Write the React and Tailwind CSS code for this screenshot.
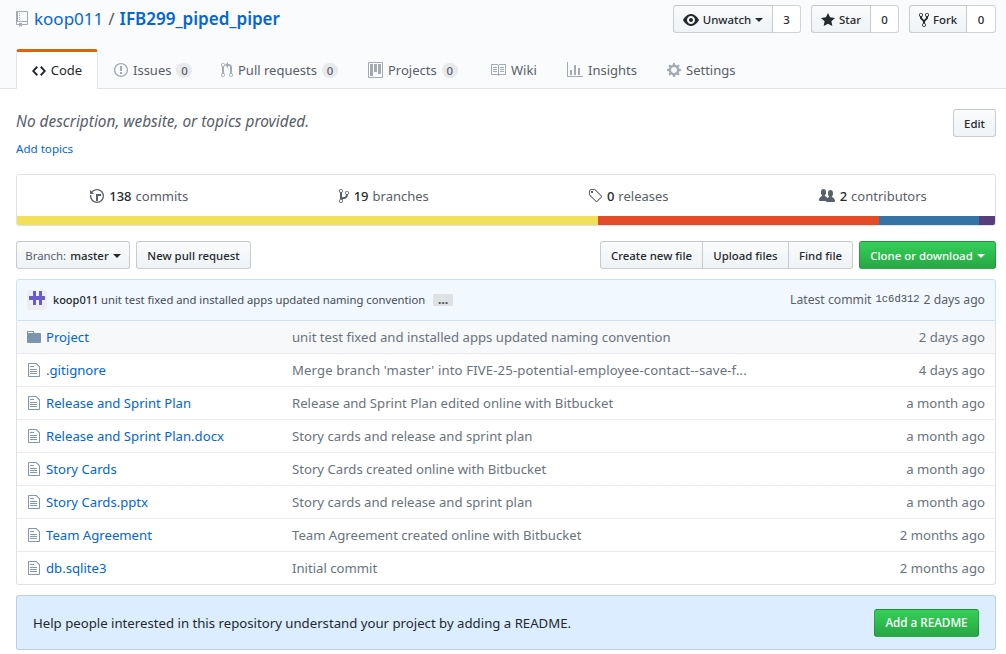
import React from "react";

const P = {
  repo: ["0 0 12 16", "M4 9H3V8h1v1zm0-3H3v1h1V6zm0-2H3v1h1V4zm0-2H3v1h1V2zm8-1v12c0 .55-.45 1-1 1H6v2l-1.5-1.5L3 16v-2H1c-.55 0-1-.45-1-1V1c0-.55.45-1 1-1h10c.55 0 1 .45 1 1zm-1 10H1v2h2v-1h3v1h5v-2zm0-10H2v9h9V1z"],
  code: ["0 0 14 16", "M9.5 3L8 4.5 11.5 8 8 11.5 9.5 13 14 8 9.5 3zm-5 0L0 8l4.5 5L6 11.5 2.5 8 6 4.5 4.5 3z"],
  issue: ["0 0 14 16", "M7 2.3c3.14 0 5.7 2.56 5.7 5.7s-2.56 5.7-5.7 5.7A5.71 5.71 0 0 1 1.3 8c0-3.14 2.56-5.7 5.7-5.7zM7 1C3.14 1 0 4.14 0 8s3.14 7 7 7 7-3.14 7-7-3.14-7-7-7zm1 3H6v5h2V4zm0 6H6v2h2v-2z"],
  pr: ["0 0 12 16", "M11 11.28V5c-.03-.78-.34-1.47-.94-2.06C9.46 2.35 8.78 2.03 8 2H7V0L4 3l3 3V4h1c.27.02.48.11.69.31.21.2.3.42.31.69v6.28A1.993 1.993 0 0 0 10 15a1.993 1.993 0 0 0 1-3.72zm-1 2.92c-.66 0-1.2-.55-1.2-1.2 0-.65.55-1.2 1.2-1.2.65 0 1.2.55 1.2 1.2 0 .65-.55 1.2-1.2 1.2zM4 3c0-1.11-.89-2-2-2a1.993 1.993 0 0 0-1 3.72v6.56A1.993 1.993 0 0 0 2 15a1.993 1.993 0 0 0 1-3.72V4.72c.59-.34 1-.98 1-1.72zm-.8 10c0 .66-.55 1.2-1.2 1.2-.65 0-1.2-.55-1.2-1.2 0-.65.55-1.2 1.2-1.2.65 0 1.2.55 1.2 1.2zM2 4.2C1.34 4.2.8 3.65.8 3c0-.65.55-1.2 1.2-1.2.65 0 1.2.55 1.2 1.2 0 .65-.55 1.2-1.2 1.2z"],
  project: ["0 0 15 16", "M10 12h3V2h-3v10zm-4-2h3V2H6v8zm-4 4h3V2H2v12zm-1 1h13V1H1v14zM14 0H1a1 1 0 0 0-1 1v14a1 1 0 0 0 1 1h13a1 1 0 0 0 1-1V1a1 1 0 0 0-1-1z"],
  book: ["0 0 16 16", "M3 5h4v1H3V5zm0 3h4V7H3v1zm0 2h4V9H3v1zm11-5h-4v1h4V5zm0 2h-4v1h4V7zm0 2h-4v1h4V9zm2-6v9c0 .55-.45 1-1 1H9.5l-1 1-1-1H2c-.55 0-1-.45-1-1V3c0-.55.45-1 1-1h5.5l1 1 1-1H15c.55 0 1 .45 1 1zm-8 .5L7.5 3H2v9h6V3.5zm7-.5H9.5l-.5.5V12h6V3z"],
  graph: ["0 0 16 16", "M16 14v1H0V0h1v14h15zM5 13H3V8h2v5zm4 0H7V3h2v10zm4 0h-2V6h2v7z"],
  gear: ["0 0 14 16", "M14 8.77v-1.6l-1.94-.64-.45-1.09.88-1.84-1.13-1.13-1.81.91-1.09-.45-.69-1.92h-1.6l-.63 1.94-1.11.45-1.84-.88-1.13 1.13.91 1.81-.45 1.09L0 7.23v1.59l1.94.64.45 1.09-.88 1.84 1.13 1.13 1.81-.91 1.09.45.69 1.92h1.59l.63-1.94 1.11-.45 1.84.88 1.13-1.13-.92-1.81.47-1.09L14 8.75v.02zM7 11c-1.66 0-3-1.34-3-3s1.34-3 3-3 3 1.34 3 3-1.34 3-3 3z"],
  eye: ["0 0 16 16", "M8.06 2C3 2 0 8 0 8s3 6 8.06 6C13 14 16 8 16 8s-3-6-7.94-6zM8 12c-2.2 0-4-1.78-4-4 0-2.2 1.8-4 4-4 2.22 0 4 1.8 4 4 0 2.22-1.78 4-4 4zm2-4c0 1.11-.89 2-2 2-1.11 0-2-.89-2-2 0-1.11.89-2 2-2 1.11 0 2 .89 2 2z"],
  star: ["0 0 14 16", "M14 6l-4.9-.64L7 1 4.9 5.36 0 6l3.6 3.26L2.67 14 7 11.67 11.33 14l-.93-4.74L14 6z"],
  fork: ["0 0 10 16", "M8 1a1.993 1.993 0 0 0-1 3.72V6L5 8 3 6V4.72A1.993 1.993 0 0 0 2 1a1.993 1.993 0 0 0-1 3.72V6.5l3 3v1.78A1.993 1.993 0 0 0 5 15a1.993 1.993 0 0 0 1-3.72V9.5l3-3V4.72A1.993 1.993 0 0 0 8 1zM2 4.2C1.34 4.2.8 3.65.8 3c0-.65.55-1.2 1.2-1.2.65 0 1.2.55 1.2 1.2 0 .65-.55 1.2-1.2 1.2zm3 10c-.66 0-1.2-.55-1.2-1.2 0-.65.55-1.2 1.2-1.2.65 0 1.2.55 1.2 1.2 0 .65-.55 1.2-1.2 1.2zm3-10c-.66 0-1.2-.55-1.2-1.2 0-.65.55-1.2 1.2-1.2.65 0 1.2.55 1.2 1.2 0 .65-.55 1.2-1.2 1.2z"],
  history: ["0 0 14 16", "M8 13H6V6h5v2H8v5zM7 1C4.81 1 2.87 2.02 1.59 3.59L0 2v4h4L2.5 4.5C3.55 3.17 5.17 2.3 7 2.3c3.14 0 5.7 2.56 5.7 5.7s-2.56 5.7-5.7 5.7A5.71 5.71 0 0 1 1.3 8c0-.34.03-.67.09-1H.08C.03 7.33 0 7.66 0 8c0 3.86 3.14 7 7 7s7-3.14 7-7-3.14-7-7-7z"],
  branch: ["0 0 10 16", "M10 5c0-1.11-.89-2-2-2a1.993 1.993 0 0 0-1 3.72v.3c-.02.52-.23.98-.63 1.38-.4.4-.86.61-1.38.63-.83.02-1.48.16-2 .45V4.72a1.993 1.993 0 0 0-1-3.72C.88 1 0 1.89 0 3a2 2 0 0 0 1 1.72v6.56c-.59.35-1 .99-1 1.72 0 1.11.89 2 2 2 1.11 0 2-.89 2-2 0-.53-.2-1-.53-1.36.09-.06.48-.41.59-.47.25-.11.56-.17.94-.17 1.05-.05 1.95-.45 2.75-1.25S8.95 7.77 9 6.73h-.02C9.59 6.37 10 5.73 10 5zM2 1.8c.66 0 1.2.55 1.2 1.2 0 .65-.55 1.2-1.2 1.2C1.35 4.2.8 3.65.8 3c0-.65.55-1.2 1.2-1.2zm0 12.41c-.66 0-1.2-.55-1.2-1.2 0-.65.55-1.2 1.2-1.2.65 0 1.2.55 1.2 1.2 0 .65-.55 1.2-1.2 1.2zm6-8c-.66 0-1.2-.55-1.2-1.2 0-.65.55-1.2 1.2-1.2.65 0 1.2.55 1.2 1.2 0 .65-.55 1.2-1.2 1.2z"],
  tag: ["0 0 14 16", "M7.73 1.73C7.26 1.26 6.62 1 5.96 1H3.5C2.13 1 1 2.13 1 3.5v2.47c0 .66.27 1.3.73 1.77l6.06 6.06c.39.39 1.02.39 1.41 0l4.59-4.59a.996.996 0 0 0 0-1.41L7.73 1.73zM2.38 7.09c-.31-.3-.47-.7-.47-1.13V3.5c0-.88.72-1.59 1.59-1.59h2.47c.42 0 .83.16 1.13.47l6.14 6.13-4.73 4.73-6.13-6.15zM3.01 3h2v2H3V3h.01z"],
  org: ["0 0 16 16", "M16 12.999c0 .439-.45 1-1 1H7.995c-.539 0-.994-.447-.995-.999H1c-.54 0-1-.561-1-1 0-2.634 3-4 3-4s.229-.409 0-1c-.841-.621-1.058-.59-1-3 .058-2.419 1.367-3 2.5-3s2.442.58 2.5 3c.058 2.41-.159 2.379-1 3-.229.59 0 1 0 1s1.549.711 2.42 2.088C9.196 9.369 10 8.999 10 8.999s.229-.409 0-1c-.841-.62-1.058-.59-1-3 .058-2.419 1.367-3 2.5-3s2.437.581 2.495 3c.059 2.41-.158 2.38-1 3-.229.59 0 1 0 1s3.005 1.366 3.005 4"],
  dir: ["0 0 14 16", "M13 4H7V3c0-.66-.31-1-1-1H1c-.55 0-1 .45-1 1v10c0 .55.45 1 1 1h12c.55 0 1-.45 1-1V5c0-.55-.45-1-1-1zM6 4H1V3h5v1z"],
  file: ["0 0 12 16", "M6 5H2V4h4v1zM2 8h7V7H2v1zm0 2h7V9H2v1zm0 2h7v-1H2v1zm10-7.5V14c0 .55-.45 1-1 1H1c-.55 0-1-.45-1-1V2c0-.55.45-1 1-1h7.5L12 4.5zM11 5L8 2H1v12h10V5z"],
};

function Icon({ n, c = "", style }) {
  const [vb, d] = P[n];
  const w = +vb.split(" ")[2];
  return (
    <svg viewBox={vb} width={w} height={16} className={"shrink-0 fill-current " + c} style={style}>
      <path fillRule="evenodd" d={d} />
    </svg>
  );
}

const Caret = ({ c = "border-t-[#24292e]" }) => (
  <span className={"inline-block w-0 h-0 border-x-[4px] border-x-transparent border-t-[4px] ml-[4px] " + c} />
);

const btn = "flex items-center justify-center h-[28px] pt-[1px] text-[11.4px] font-medium text-[#24292e] border border-[rgba(27,31,35,0.2)] bg-gradient-to-b from-[#fafbfc] to-[#eff3f6]";
const greenBtn = "flex items-center justify-center h-[28px] pt-[1px] text-[11.4px] font-medium text-white border border-[rgba(27,31,35,0.2)] rounded-[3px] bg-gradient-to-b from-[#34d058] to-[#28a745]";
const count = "flex items-center justify-center h-[28px] pt-[1px] text-[11.4px] font-medium text-[#24292e] bg-white border border-l-0 border-[rgba(27,31,35,0.2)] rounded-r-[3px]";

function Counter({ n }) {
  return <span className="ml-[5px] inline-flex items-center justify-center h-[15px] w-[16px] rounded-full bg-[rgba(27,31,35,0.08)] text-[11.4px] font-medium text-[#586069]">{n}</span>;
}

function Tab({ icon, label, n, w }) {
  return (
    <div className="flex items-center h-[40px] pt-[3px] text-[#586069] text-[13px]" style={{ width: w }}>
      <Icon n={icon} c="text-[#a3aab1] mr-[5px] -mt-[1px]" />
      <span>{label}</span>
      {n !== undefined && <Counter n={n} />}
    </div>
  );
}

const rows = [
  ["dir", "Project", "unit test fixed and installed apps updated naming convention", "2 days ago"],
  ["file", ".gitignore", "Merge branch 'master' into FIVE-25-potential-employee-contact--save-f...", "4 days ago"],
  ["file", "Release and Sprint Plan", "Release and Sprint Plan edited online with Bitbucket", "a month ago"],
  ["file", "Release and Sprint Plan.docx", "Story cards and release and sprint plan", "a month ago"],
  ["file", "Story Cards", "Story Cards created online with Bitbucket", "a month ago"],
  ["file", "Story Cards.pptx", "Story cards and release and sprint plan", "a month ago"],
  ["file", "Team Agreement", "Team Agreement created online with Bitbucket", "2 months ago"],
  ["file", "db.sqlite3", "Initial commit", "2 months ago"],
];

function Stat({ icon, n, label }) {
  return (
    <div className="flex-1 flex items-center justify-center text-[13px] text-[#586069]">
      <Icon n={icon} c="text-[#586069] mr-[5px]" />
      <span className="font-medium text-[#24292e] mr-[4px] pt-[2px]">{n}</span>
      <span className="pt-[2px]">{label}</span>
    </div>
  );
}

export default function App() {
  return (
    <div className="h-[654px] overflow-hidden bg-white text-[#24292e] font-['Noto_Sans','Open_Sans',sans-serif]">
      <div className="h-[89px] bg-[#fafbfc] border-b border-[#e1e4e8]">
        <div className="flex items-start justify-between pl-[16px] pr-[10px] pt-[5px] h-[49px]">
          <div className="flex items-center h-[28px] text-[17px]">
            <Icon n="repo" c="text-[#a3aab1] mr-[6px]" />
            <span className="text-[#0366d6]">koop011</span>
            <span className="text-[#586069] mx-[5px]">/</span>
            <span className="text-[#0366d6] font-semibold">IFB299_piped_piper</span>
          </div>
          <div className="flex">
            <div className={btn + " w-[100px] rounded-l-[3px]"}><Icon n="eye" c="mr-[4px]" />Unwatch<Caret /></div>
            <div className={count + " w-[28px]"}>3</div>
            <div className={btn + " w-[60px] rounded-l-[3px] ml-[10px]"}><Icon n="star" c="mr-[4px]" />Star</div>
            <div className={count + " w-[28px]"}>0</div>
            <div className={btn + " w-[58px] rounded-l-[3px] ml-[10px]"}><Icon n="fork" c="mr-[4px]" />Fork</div>
            <div className={count + " w-[29px]"}>0</div>
          </div>
        </div>
        <div className="flex pl-[16px]">
          <div className="flex items-center justify-center w-[82px] h-[40px] bg-white border-x border-[#e1e4e8] border-t-[3px] border-t-[#e36209] rounded-t-[3px] text-[13px] text-[#24292e] relative z-10">
            <Icon n="code" c="mr-[5px]" />Code
          </div>
          <div className="w-[16px]" />
          <Tab icon="issue" label="Issues" n={0} w={107} />
          <Tab icon="pr" label="Pull requests" n={0} w={147} />
          <Tab icon="project" label="Projects" n={0} w={122} />
          <Tab icon="book" label="Wiki" w={77} />
          <Tab icon="graph" label="Insights" w={100} />
          <Tab icon="gear" label="Settings" w={80} />
        </div>
      </div>

      <div className="pl-[16px] pr-[10px]">
        <div className="flex justify-between h-[85px] pt-[20px]">
          <div>
            <div className="text-[15.4px] italic text-[#586069] leading-[24px] pt-[1px]">No description, website, or topics provided.</div>
            <div className="text-[11.6px] text-[#0366d6] mt-[6px] leading-[18px]">Add topics</div>
          </div>
          <div className={btn + " w-[43px] rounded-[3px]"}>Edit</div>
        </div>

        <div className="h-[52px] border border-[#dfe2e5] rounded-[3px] overflow-hidden flex flex-col">
          <div className="flex-1 flex">
            <Stat icon="history" n="138" label="commits" />
            <Stat icon="branch" n="19" label="branches" />
            <Stat icon="tag" n="0" label="releases" />
            <Stat icon="org" n="2" label="contributors" />
          </div>
          <div className="flex h-[9px] w-full">
            <div className="w-[581px] bg-[#f1e05a]" />
            <div className="w-[281px] bg-[#e34c26]" />
            <div className="w-[100px] bg-[#3572a5]" />
            <div className="flex-1 bg-[#563d7c]" />
          </div>
        </div>

        <div className="flex justify-between mt-[15px]">
          <div className="flex">
            <div className={btn + " w-[114px] rounded-[3px]"}><span className="font-normal text-[#586069] mr-[4px]">Branch:</span>master<Caret /></div>
            <div className={btn + " w-[115px] rounded-[3px] ml-[6px]"}>New pull request</div>
          </div>
          <div className="flex">
            <div className={btn + " w-[103px] rounded-l-[3px]"}>Create new file</div>
            <div className={btn + " w-[86px] border-l-0"}>Upload files</div>
            <div className={btn + " w-[64px] border-l-0 rounded-r-[3px]"}>Find file</div>
            <div className={greenBtn + " w-[137px] ml-[6px]"}>Clone or download<Caret c="border-t-white" /></div>
          </div>
        </div>

        <div className="mt-[10px] flex items-center justify-between h-[42px] bg-[#f1f8ff] border border-[#c8e1ff] rounded-t-[3px] px-[10px]">
          <div className="flex items-center">
            <div className="w-[20px] h-[20px] bg-[#eeeeee] rounded-[3px] mr-[6px] overflow-hidden">
              <svg viewBox="0 0 20 20" width="20" height="20">
                <path fill="#6a5acd" d="M6 1h3v5h3V1h3v5h3v4h-3v5h-3v-5H9v5H6v-5H2V6h4z" />
              </svg>
            </div>
            <span className="w-[48px] text-[11px] font-medium text-[#24292e] pt-[1px]">koop011</span>
            <span className="text-[11.25px] text-[#444d56] pt-[1px]">unit test fixed and installed apps updated naming convention</span>
            <span className="ml-[8px] w-[20px] h-[12px] bg-[#dfe2e5] rounded-[1px] flex items-center justify-center text-[12px] font-bold leading-[6px] text-[#444d56]">…</span>
          </div>
          <div className="text-[12.2px] text-[#586069] flex items-center">
            Latest commit<span className="font-['Liberation_Mono',monospace] text-[10.5px] text-[#444d56] mx-[4px]">1c6d312</span>2 days ago
          </div>
        </div>

        <div className="border border-t-0 border-[#dfe2e5] rounded-b-[3px]">
          {rows.map((r, i) => (
            <div key={r[1]} className={"flex items-center text-[13.15px] px-[10px] " + (i === 0 ? "bg-[#f6f8fa] h-[32px]" : "h-[33px] border-t border-[#eaecef]")}>
              <Icon n={r[0]} c="text-[rgba(3,47,98,0.5)] w-[14px]" />
              <span className="w-[246px] ml-[5px] pt-[2px] text-[#0366d6] whitespace-nowrap">{r[1]}</span>
              <span className={"flex-1 pt-[2px] text-[#6a737d] whitespace-nowrap " + (i === 1 ? "tracking-[0.13px]" : "")}>{r[2]}</span>
              <span className="pt-[2px] text-[#6a737d] whitespace-nowrap">{r[3]}</span>
            </div>
          ))}
        </div>

        <div className="mt-[10px] h-[55px] flex items-center justify-between bg-[#dbedff] border border-[rgba(27,31,35,0.15)] rounded-[3px] px-[16px]">
          <span className="text-[13.2px] pt-[2px] text-[#24292e]">Help people interested in this repository understand your project by adding a README.</span>
          <div className={greenBtn + " w-[105px] text-[11.7px]"}>Add a README</div>
        </div>
      </div>
    </div>
  );
}
